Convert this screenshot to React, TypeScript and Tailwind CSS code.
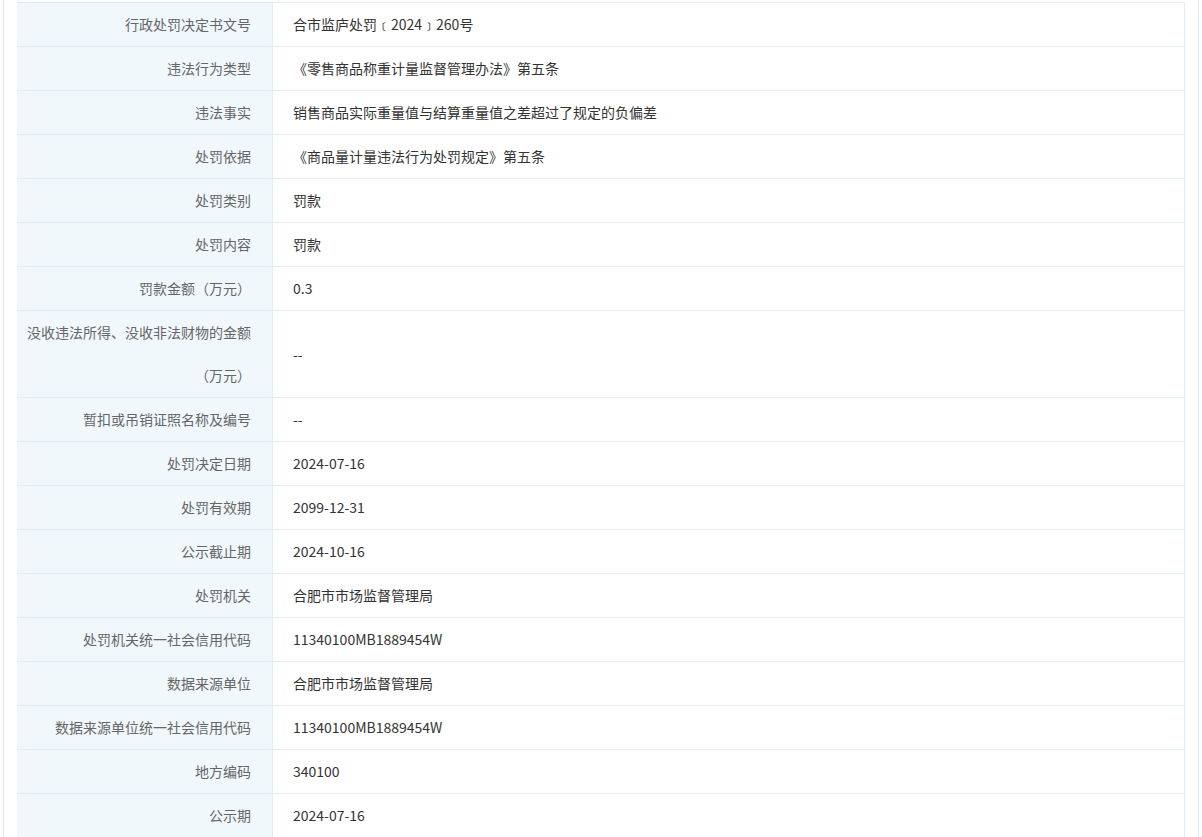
const rows: [string, string][] = [
  ["行政处罚决定书文号", "合市监庐处罚﹝2024﹞260号"],
  ["违法行为类型", "《零售商品称重计量监督管理办法》第五条"],
  ["违法事实", "销售商品实际重量值与结算重量值之差超过了规定的负偏差"],
  ["处罚依据", "《商品量计量违法行为处罚规定》第五条"],
  ["处罚类别", "罚款"],
  ["处罚内容", "罚款"],
  ["罚款金额（万元）", "0.3"],
  ["没收违法所得、没收非法财物的金额（万元）", "--"],
  ["暂扣或吊销证照名称及编号", "--"],
  ["处罚决定日期", "2024-07-16"],
  ["处罚有效期", "2099-12-31"],
  ["公示截止期", "2024-10-16"],
  ["处罚机关", "合肥市市场监督管理局"],
  ["处罚机关统一社会信用代码", "11340100MB1889454W"],
  ["数据来源单位", "合肥市市场监督管理局"],
  ["数据来源单位统一社会信用代码", "11340100MB1889454W"],
  ["地方编码", "340100"],
  ["公示期", "2024-07-16"],
];

export default function App() {
  return (
    <div className="h-[837px] overflow-hidden bg-white px-[3px]" style={{ fontFamily: '"Noto Sans CJK SC", "Noto Sans", sans-serif' }}>
      <div className="h-full border-x border-[#e5e9ee] pl-[13px] pr-[13px] pt-[2px]">
        <div className="border-t border-r border-[#e1edf1] text-[14px]">
          {rows.map(([k, v], i) => (
            <div key={i} className="flex border-b border-[#e1edf1]">
              <div className="w-[256px] shrink-0 bg-[#f0f8fc] border-r border-[#e1edf1] text-right text-[#666] pr-[21px] pl-[8px] leading-[43px]">
                {k}
              </div>
              <div className="flex-1 flex items-center px-[20px] text-[#333] leading-[43px]">{v}</div>
            </div>
          ))}
        </div>
      </div>
    </div>
  );
}
